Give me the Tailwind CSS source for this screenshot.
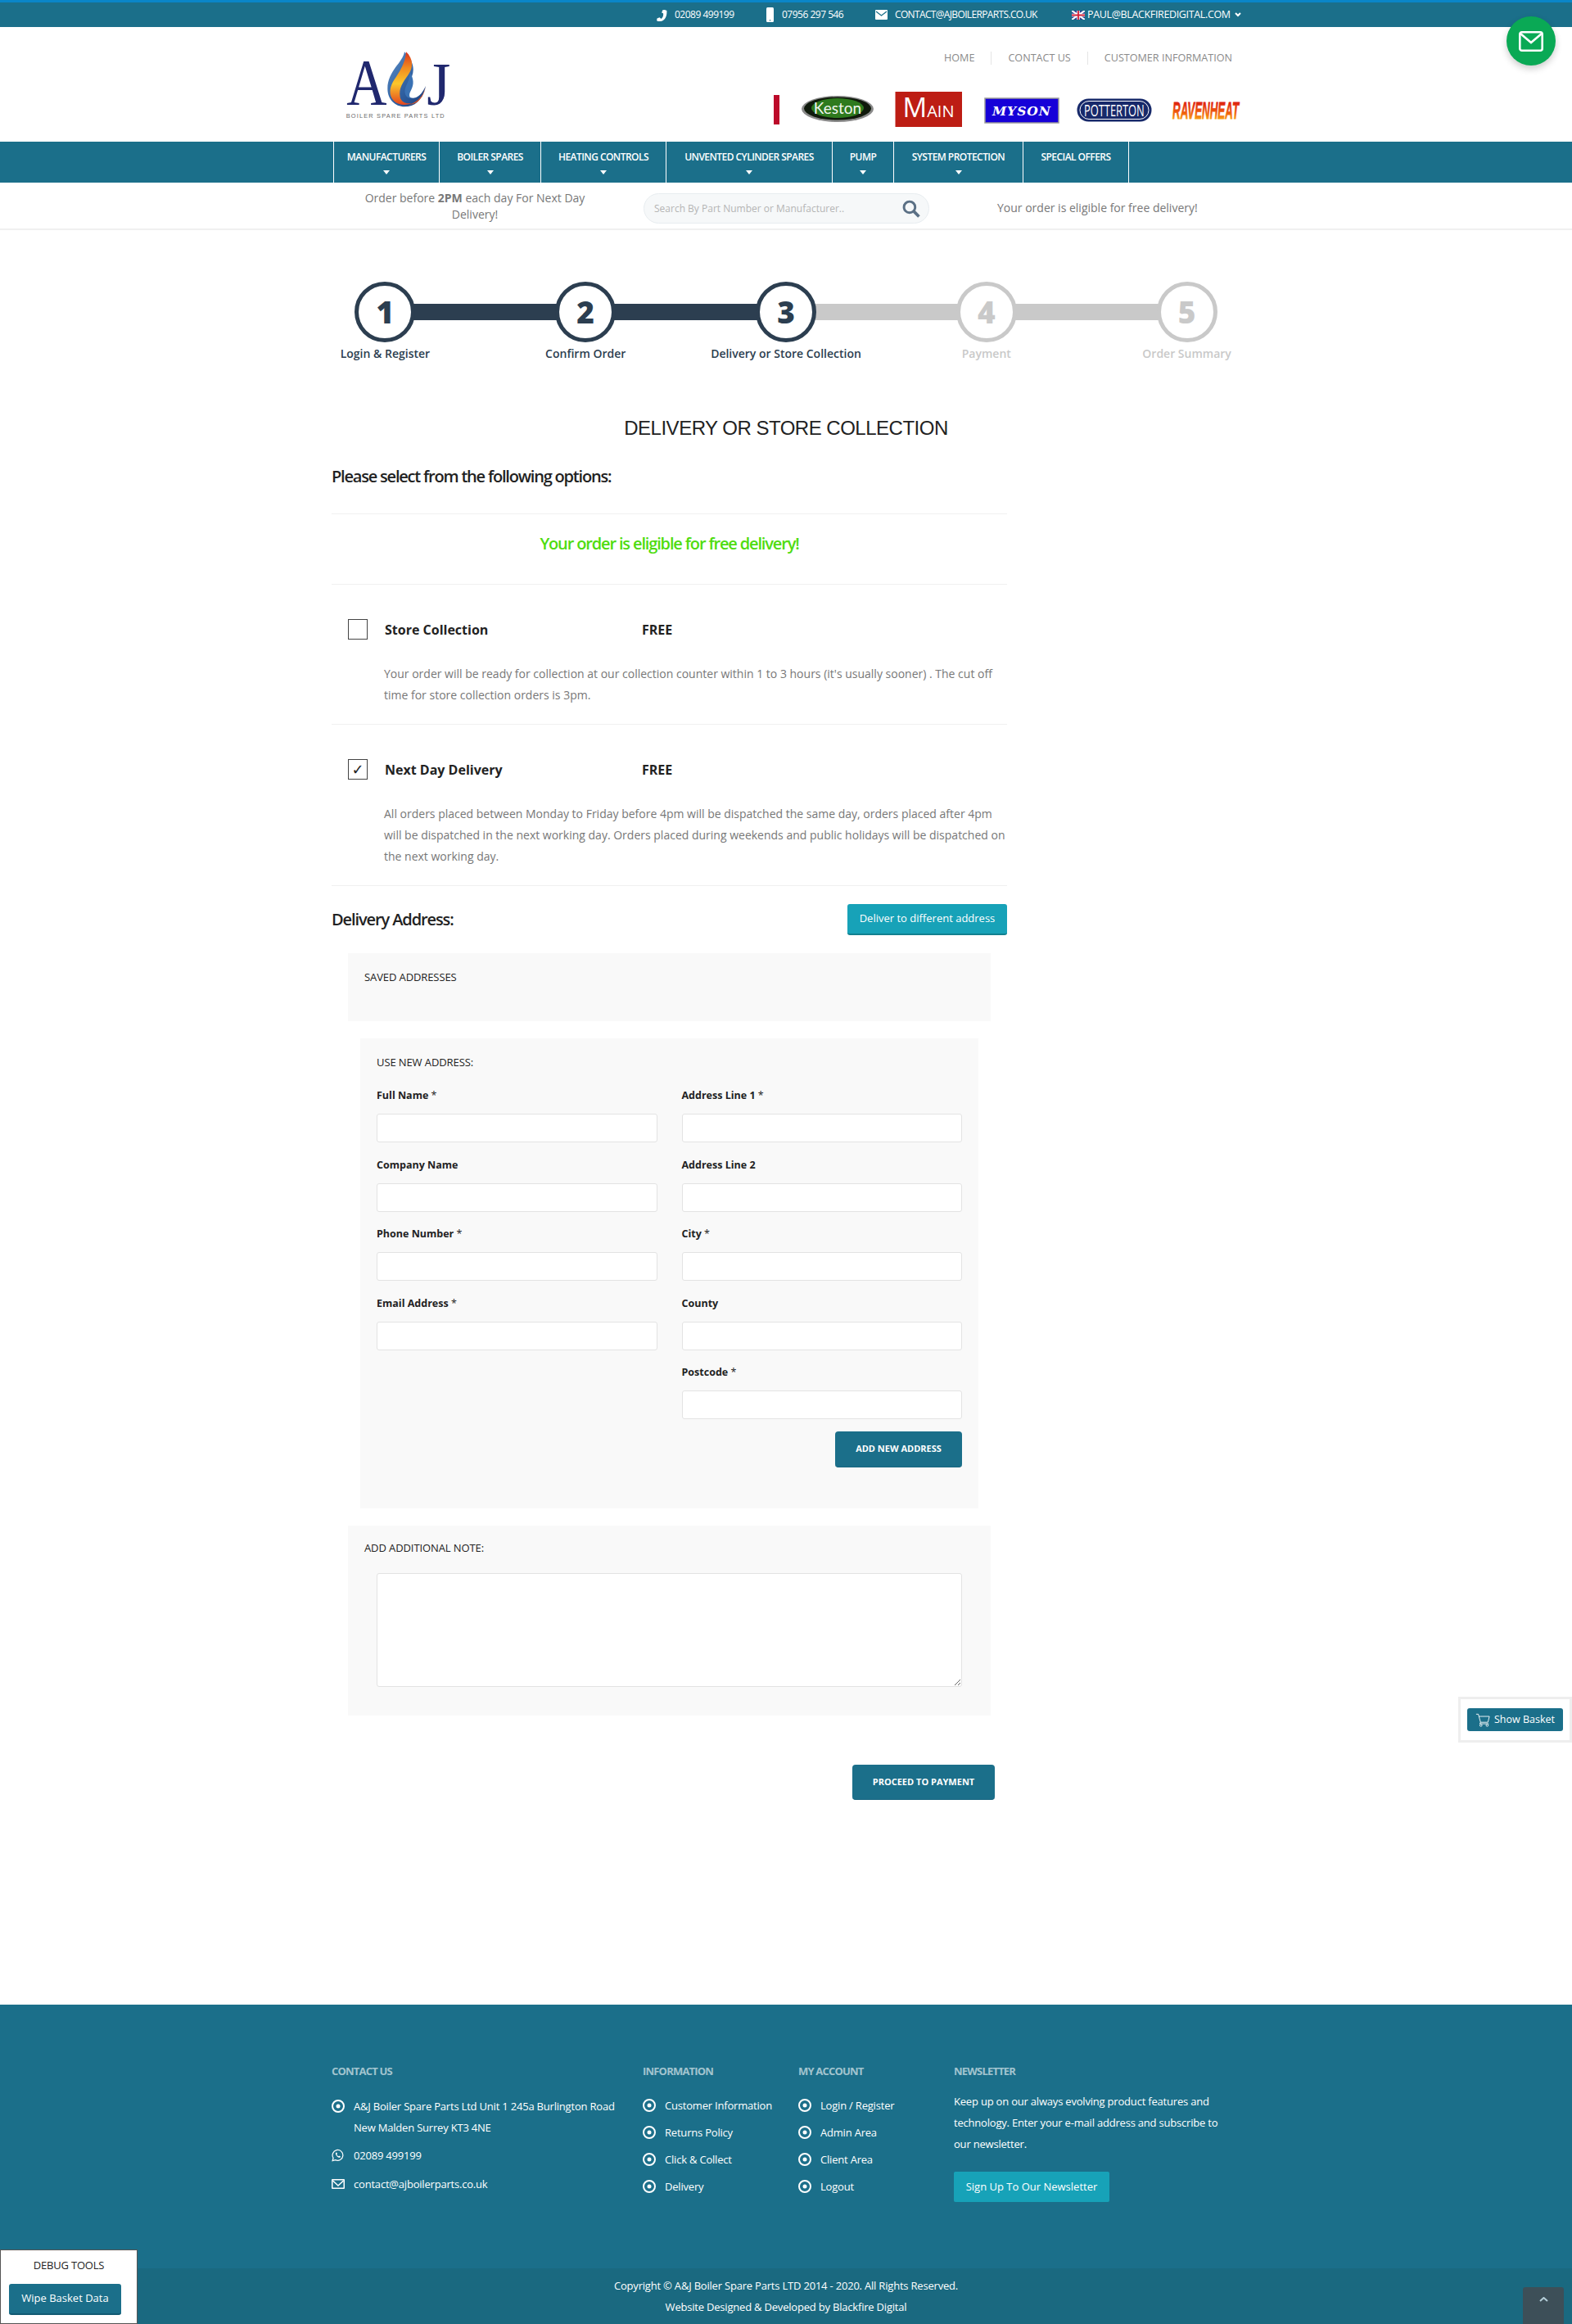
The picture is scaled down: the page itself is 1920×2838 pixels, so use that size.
<!DOCTYPE html>
<html lang="en"><head><meta charset="utf-8"><title>Delivery or Store Collection</title>
<script src="https://cdn.jsdelivr.net/npm/@tailwindcss/browser@4"></script></head>
<body class="bg-white">
<div class="relative h-[2838px] w-[1920px] overflow-hidden font-['Open_Sans',sans-serif] text-[14px] text-[#777]">

<!-- top bar -->
<header class="h-[33px] border-t-[3px] border-[#0a86c8] bg-[#1b6f8a] text-white text-[12px]">
  <div class="flex h-[30px] items-center pl-[800px]">
    <svg class="w-[15px] h-[15px]" viewBox="0 0 24 24" fill="#fff"><path d="M19 1.500l4 1.500c.6 9-2 20-13 21l-3 .3-3-1c-1-2 0-3.500 0-5l5-2 3 3c3-2 5-7 4-11L13 7l2-5z"/></svg>
    <span class="ml-[9px] w-[72px] whitespace-nowrap tracking-[-0.5px]">02089 499199</span>
    <svg class="ml-[40px] w-[9px] h-[18px]" viewBox="0 0 9 18"><rect width="9" height="18" rx="1.500" fill="#fff"/><rect x="4" y="15" width="1" height="1.500" fill="#1b6f8a"/></svg>
    <span class="ml-[10px] w-[75px] whitespace-nowrap tracking-[-0.5px]">07956 297 546</span>
    <svg class="ml-[39px] w-[15px] h-[12px]" viewBox="0 0 15 12"><rect width="15" height="12" rx="1" fill="#fff"/><path d="M1 2l6.500 5L14 2" fill="none" stroke="#1b6f8a" stroke-width="1.300"/></svg>
    <span class="ml-[9px] w-[177px] whitespace-nowrap tracking-[-0.65px]">CONTACT@AJBOILERPARTS.CO.UK</span>
    <svg class="ml-[39px] w-[16px] h-[11px]" viewBox="0 0 16 11"><rect width="16" height="11" fill="#2b3f8c"/><path d="M0 0l16 11M16 0L0 11" stroke="#fff" stroke-width="2.200"/><path d="M8 0v11M0 5.500h16" stroke="#fff" stroke-width="3.500"/><path d="M8 0v11M0 5.500h16" stroke="#d3213a" stroke-width="1.800"/></svg>
    <span class="ml-[3px] w-[177px] whitespace-nowrap text-[12.500px] tracking-[-0.35px]">PAUL@BLACKFIREDIGITAL.COM</span>
    <svg class="ml-[3px] w-[8px] h-[6px]" viewBox="0 0 8 6"><path d="M1 1l3 3 3-3" fill="none" stroke="#fff" stroke-width="2"/></svg>
  </div>
</header>

<!-- logo row -->
<div class="flex h-[140px] pl-[410px]">
  <svg class="mt-[22px] w-[150px] h-[100px]" viewBox="0 0 450 300" role="img" aria-label="A&amp;J Boiler Spare Parts Ltd">
    <defs>
      <linearGradient id="fa" x1="0" y1="0" x2="1" y2="1"><stop offset="0" stop-color="#5c8fc8"/><stop offset=".6" stop-color="#2d5d9e"/><stop offset="1" stop-color="#1e3f7c"/></linearGradient>
      <linearGradient id="fb" x1="0" y1="0" x2="0" y2="1"><stop offset="0" stop-color="#d8301c"/><stop offset=".3" stop-color="#f08a1f"/><stop offset=".6" stop-color="#fbc72c"/><stop offset="1" stop-color="#e3431e"/></linearGradient>
    </defs>
    <text transform="translate(40 220) scale(.86 1)" font-family="Liberation Serif" font-size="238" fill="#20286e">A</text>
    <text x="334" y="220" font-family="Liberation Serif" font-size="224" fill="#20286e">J</text>
    <path d="M252 25c-6 40-62 70-62 135 0 40 28 66 62 66 36 0 66-22 78-76-14 30-30 44-46 44-30 0-30-34-14-60 14-24 30-60-18-109z" fill="url(#fa)"/>
    <path d="M258 25c28 26 26 60 8 84-20 28-36 50-30 82 4 16 20 26 42 22-36 16-72-2-78-34-4-34 18-54 36-86 10-18 20-40 22-68z" fill="url(#fb)"/>
    <path d="M272 100c14 24 16 44 4 66-8 14-8 26 2 30-16 0-28-14-24-34 4-18 18-34 18-62z" fill="#3a72b4"/>
    <path d="M330 150c-6 34-28 58-60 68 20 0 52-16 60-68z" fill="#e3531e"/>
    <text x="38" y="266" font-family="Liberation Sans" font-size="22" textLength="360" fill="#6b6b6b">BOILER SPARE PARTS LTD</text>
  </svg>
  <div class="ml-[-5px] flex w-[950px] flex-col items-end">
    <nav class="mt-[30px] flex h-[16px] items-center whitespace-nowrap text-[12.600px] text-[#8a8a8a]">
      <span>HOME</span><span class="ml-[20px] h-[16px] w-px bg-[#e5e5e5]"></span>
      <span class="ml-[20px]">CONTACT US</span><span class="ml-[20px] h-[16px] w-px bg-[#e5e5e5]"></span>
      <span class="ml-[20px]">CUSTOMER INFORMATION</span>
    </nav>
    <div class="mt-[33px] flex items-center self-start pl-[390px]">
      <svg class="h-[45px] w-[575px] shrink-0" viewBox="0 0 575 45" role="img" aria-label="Manufacturer logos">
        <defs><linearGradient id="rv" x1="0" y1="0" x2="0" y2="1"><stop offset="0.1" stop-color="#d80f0f"/><stop offset=".6" stop-color="#f0600c"/><stop offset="1" stop-color="#ffd21a"/></linearGradient></defs>
        <rect x="0" y="4" width="7" height="36" fill="#bc0a2a"/>
        <ellipse cx="78" cy="21" rx="44" ry="16" fill="#8a8a8a"/><ellipse cx="78" cy="20.500" rx="41" ry="14" fill="#101a0c"/><ellipse cx="78" cy="20" rx="32" ry="12" fill="#2e7a1e"/>
        <text x="78" y="27" text-anchor="middle" font-family="Lato" font-size="19" fill="#f0f5ee">Keston</text>
        <rect x="148.500" y="0" width="81.500" height="43" fill="#bd1d14"/>
        <text x="189" y="31" text-anchor="middle" font-family="Open Sans" font-size="20" fill="#fff"><tspan font-size="33">M</tspan>AIN</text>
        <rect x="258" y="8" width="90" height="30" fill="#1600d8" stroke="#9a9a9a" stroke-width="1.500"/>
        <text x="303" y="29" text-anchor="middle" font-family="DejaVu Serif" font-weight="700" font-style="italic" font-size="15.500" letter-spacing="1" fill="#fff">MYSON</text>
        <rect x="370.500" y="8.500" width="91" height="28" rx="14" fill="#17296a"/><rect x="374" y="11.500" width="84" height="22" rx="11" fill="none" stroke="#fff" stroke-width="1"/>
        <text transform="translate(379 29.500) scale(.66 1)" font-family="Open Sans" font-size="19.500" fill="#fff">POTTERTON</text>
        <text transform="translate(487 33) scale(.445 1)" font-family="Liberation Sans" font-weight="700" font-style="italic" font-size="30" stroke="url(#rv)" stroke-width=".8" fill="url(#rv)">RAVENHEAT</text>
      </svg>
    </div>
  </div>
</div>

<!-- nav -->
<nav class="flex h-[50px] bg-[#1b6f8a] pl-[407px] text-white text-[12px] font-semibold tracking-[-0.55px] uppercase">
  <div class="flex h-full border-l border-white">
    <a class="flex w-[129px] flex-col items-center border-r border-white pt-[10px]"><span class="leading-[18px]">Manufacturers</span><i class="mt-[7px] h-0 w-0 border-x-[4px] border-t-[5px] border-x-transparent border-t-white"></i></a>
    <a class="flex w-[124px] flex-col items-center border-r border-white pt-[10px]"><span class="leading-[18px]">Boiler Spares</span><i class="mt-[7px] h-0 w-0 border-x-[4px] border-t-[5px] border-x-transparent border-t-white"></i></a>
    <a class="flex w-[153px] flex-col items-center border-r border-white pt-[10px]"><span class="leading-[18px]">Heating Controls</span><i class="mt-[7px] h-0 w-0 border-x-[4px] border-t-[5px] border-x-transparent border-t-white"></i></a>
    <a class="flex w-[203px] flex-col items-center border-r border-white pt-[10px]"><span class="leading-[18px]">Unvented Cylinder Spares</span><i class="mt-[7px] h-0 w-0 border-x-[4px] border-t-[5px] border-x-transparent border-t-white"></i></a>
    <a class="flex w-[75px] flex-col items-center border-r border-white pt-[10px]"><span class="leading-[18px]">Pump</span><i class="mt-[7px] h-0 w-0 border-x-[4px] border-t-[5px] border-x-transparent border-t-white"></i></a>
    <a class="flex w-[158px] flex-col items-center border-r border-white pt-[10px]"><span class="leading-[18px]">System Protection</span><i class="mt-[7px] h-0 w-0 border-x-[4px] border-t-[5px] border-x-transparent border-t-white"></i></a>
    <a class="flex w-[129px] flex-col items-center border-r border-white pt-[10px]"><span class="leading-[18px]">Special Offers</span></a>
  </div>
</nav>

<!-- sub bar -->
<div class="flex h-[58px] border-b-2 border-[#f0f0f0]">
  <p class="ml-[430px] mt-[9px] w-[300px] text-center leading-[20px]">Order before <b class="font-bold">2PM</b> each day For Next Day Delivery!</p>
  <div class="ml-[56px] mt-[13px] flex h-[37px] w-[349px] items-center justify-between rounded-full border border-[#e8edf0] bg-[#f6f8f9] pl-[12px] pr-[10px]">
    <span class="text-[12px] text-[#b5b5b5]">Search By Part Number or Manufacturer..</span>
    <svg class="h-[22px] w-[22px]" viewBox="0 0 21 21" fill="none" stroke="#5b7085" stroke-width="2.800"><circle cx="8.500" cy="8.500" r="6.500"/><path d="M13.500 13.500L19.500 19.500" stroke-width="3.500"/></svg>
  </div>
  <p class="ml-[83px] mt-[21px] whitespace-nowrap leading-[20px]">Your order is eligible for free delivery!</p>
</div>

<!-- stepper -->
<ol class="mx-auto mt-[63px] grid w-[1224px] grid-cols-5 text-center text-[14px] font-semibold">
  <li class="relative flex flex-col items-center text-[#2c3e50]">
    <span class="relative z-10 flex h-[74px] w-[74px] items-center justify-center rounded-full border-[5px] border-[#2c3e50] bg-white text-[37px] font-extrabold">1</span>
    <span class="mt-[4px] leading-[20px]">Login &amp; Register</span>
  </li>
  <li class="relative flex flex-col items-center text-[#2c3e50]">
    <span class="absolute right-1/2 top-[27px] h-[20px] w-full bg-[#2c3e50]"></span>
    <span class="relative z-10 flex h-[74px] w-[74px] items-center justify-center rounded-full border-[5px] border-[#2c3e50] bg-white text-[37px] font-extrabold">2</span>
    <span class="mt-[4px] leading-[20px]">Confirm Order</span>
  </li>
  <li class="relative flex flex-col items-center text-[#2c3e50]">
    <span class="absolute right-1/2 top-[27px] h-[20px] w-full bg-[#2c3e50]"></span>
    <span class="relative z-10 flex h-[74px] w-[74px] items-center justify-center rounded-full border-[5px] border-[#2c3e50] bg-white text-[37px] font-extrabold">3</span>
    <span class="mt-[4px] leading-[20px]">Delivery or Store Collection</span>
  </li>
  <li class="relative flex flex-col items-center text-[#c9c9c9]">
    <span class="absolute right-1/2 top-[27px] h-[20px] w-full bg-[#c9c9c9]"></span>
    <span class="relative z-10 flex h-[74px] w-[74px] items-center justify-center rounded-full border-[5px] border-[#c9c9c9] bg-white text-[37px] font-extrabold">4</span>
    <span class="mt-[4px] leading-[20px]">Payment</span>
  </li>
  <li class="relative flex flex-col items-center text-[#c9c9c9]">
    <span class="absolute right-1/2 top-[27px] h-[20px] w-full bg-[#c9c9c9]"></span>
    <span class="relative z-10 flex h-[74px] w-[74px] items-center justify-center rounded-full border-[5px] border-[#c9c9c9] bg-white text-[37px] font-extrabold">5</span>
    <span class="mt-[4px] leading-[20px]">Order Summary</span>
  </li>
</ol>

<h1 class="mt-[65px] text-center font-['Liberation_Sans',sans-serif] text-[24px] leading-[32px] tracking-[-0.5px] text-[#222] uppercase">Delivery or Store Collection</h1>

<main class="ml-[405px] w-[825px]">
  <h2 class="mt-[29px] text-[20px] font-semibold leading-[28px] tracking-[-1.2px] text-[#222]">Please select from the following options:</h2>
  <div class="mt-[31px] h-[87px] border-y border-[#f0f0f0] pt-[22px] text-center text-[20px] font-semibold leading-[28px] tracking-[-1.15px] text-[#4fdc10]">Your order is eligible for free delivery!</div>

  <section class="h-[171px] border-b border-[#f0f0f0] pl-[20px] pt-[42px]">
    <div class="flex h-[25px] items-center text-[16px] font-bold text-[#222]">
      <span class="h-[25px] w-[24px] border border-[#444]"></span>
      <span class="ml-[21px] w-[314px]">Store Collection</span><span>FREE</span>
    </div>
    <p class="ml-[44px] mt-[29px] leading-[26px]">Your order will be ready for collection at our collection counter within 1 to 3 hours (it's usually sooner) . The cut off time for store collection orders is 3pm.</p>
  </section>
  <section class="h-[197px] border-b border-[#f0f0f0] pl-[20px] pt-[42px]">
    <div class="flex h-[25px] items-center text-[16px] font-bold text-[#222]">
      <span class="flex h-[25px] w-[24px] items-center justify-center border border-[#444] font-['DejaVu_Sans',sans-serif] text-[18px] font-normal">✓</span>
      <span class="ml-[21px] w-[314px]">Next Day Delivery</span><span>FREE</span>
    </div>
    <p class="ml-[44px] mt-[29px] leading-[26px]">All orders placed between Monday to Friday before 4pm will be dispatched the same day, orders placed after 4pm will be dispatched in the next working day. Orders placed during weekends and public holidays will be dispatched on the next working day.</p>
  </section>

  <div class="flex items-center justify-between pt-[22px]">
    <h2 class="text-[20px] font-semibold leading-[28px] tracking-[-1.1px] text-[#222]">Delivery Address:</h2>
    <button class="h-[38px] w-[195px] rounded-[3px] border-b-2 border-[#11808f] bg-[#17a2b8] text-[13px] font-normal text-white">Deliver to different address</button>
  </div>

  <section class="ml-[20px] mt-[22px] h-[83px] w-[785px] bg-[#f9f9f9] pl-[20px] pt-[19px]">
    <h3 class="text-[13px] font-normal leading-[20px] tracking-[-0.1px] text-[#222] uppercase">Saved Addresses</h3>
  </section>

  <section class="ml-[35px] mt-[21px] h-[574px] w-[755px] bg-[#f9f9f9] pl-[20px] pt-[19px]">
    <h3 class="text-[13px] font-normal leading-[20px] tracking-[-0.1px] text-[#222] uppercase">Use new address:</h3>
    <div class="mt-[21px] grid w-[715px] grid-cols-2 gap-x-[30px] gap-y-[17.500px] text-[12.500px] font-bold text-[#222]">
      <label class="block"><span class="block leading-[20px]">Full Name <span class="font-normal">*</span></span><input class="mt-[12px] block h-[35px] w-full rounded-[3px] border border-[#e3e3e3] bg-white"></label>
      <label class="block"><span class="block leading-[20px]">Address Line 1 <span class="font-normal">*</span></span><input class="mt-[12px] block h-[35px] w-full rounded-[3px] border border-[#e3e3e3] bg-white"></label>
      <label class="block"><span class="block leading-[20px]">Company Name</span><input class="mt-[12px] block h-[35px] w-full rounded-[3px] border border-[#e3e3e3] bg-white"></label>
      <label class="block"><span class="block leading-[20px]">Address Line 2</span><input class="mt-[12px] block h-[35px] w-full rounded-[3px] border border-[#e3e3e3] bg-white"></label>
      <label class="block"><span class="block leading-[20px]">Phone Number <span class="font-normal">*</span></span><input class="mt-[12px] block h-[35px] w-full rounded-[3px] border border-[#e3e3e3] bg-white"></label>
      <label class="block"><span class="block leading-[20px]">City <span class="font-normal">*</span></span><input class="mt-[12px] block h-[35px] w-full rounded-[3px] border border-[#e3e3e3] bg-white"></label>
      <label class="block"><span class="block leading-[20px]">Email Address <span class="font-normal">*</span></span><input class="mt-[12px] block h-[35px] w-full rounded-[3px] border border-[#e3e3e3] bg-white"></label>
      <label class="block"><span class="block leading-[20px]">County</span><input class="mt-[12px] block h-[35px] w-full rounded-[3px] border border-[#e3e3e3] bg-white"></label>
      <div></div>
      <label class="block"><span class="block leading-[20px]">Postcode <span class="font-normal">*</span></span><input class="mt-[12px] block h-[35px] w-full rounded-[3px] border border-[#e3e3e3] bg-white"></label>
    </div>
    <div class="mt-[15px] flex w-[715px] justify-end">
      <button class="h-[44px] w-[155px] rounded-[4px] border-b border-[#176580] bg-[#1b6f8a] text-[11px] font-bold text-white uppercase">Add new address</button>
    </div>
  </section>

  <section class="ml-[20px] mt-[21px] h-[232px] w-[785px] bg-[#f9f9f9] pl-[20px] pt-[17px]">
    <h3 class="text-[13px] font-normal leading-[20px] tracking-[-0.1px] text-[#222] uppercase">Add additional note:</h3>
    <textarea class="ml-[15px] mt-[21px] block h-[139px] w-[715px] rounded-[3px] border border-[#e3e3e3] bg-white" aria-label="Additional note"></textarea>
  </section>

  <div class="mt-[60px] flex justify-end pr-[15px]">
    <button class="h-[43px] w-[174px] rounded-[4px] border-b border-[#176580] bg-[#1b6f8a] text-[11px] font-bold text-white uppercase">Proceed to payment</button>
  </div>
</main>

<!-- footer -->
<footer class="mt-[250px] bg-[#1b6f8a] text-white">
  <div class="grid h-[322px] grid-cols-[380px_190px_190px_350px] pl-[405px] pt-[71px] text-[13px] tracking-[-0.2px]">
    <div>
      <h4 class="text-[13px] font-bold leading-[20px] tracking-[-0.8px] text-white/60 uppercase">Contact us</h4>
      <div class="mt-[20px] flex">
        <svg class="mt-[5px] h-[16px] w-[16px] shrink-0" viewBox="0 0 16 16"><circle cx="8" cy="8" r="7" fill="none" stroke="#fff" stroke-width="2"/><circle cx="8" cy="8" r="2.500" fill="#fff"/></svg>
        <p class="ml-[11px] w-[350px] leading-[26px]">A&amp;J Boiler Spare Parts Ltd Unit 1 245a Burlington Road<br>New Malden Surrey KT3 4NE</p>
      </div>
      <div class="mt-[8px] flex items-center leading-[26px]">
        <svg class="h-[16px] w-[15px] shrink-0" viewBox="0 0 16 16" fill="none" stroke="#fff" stroke-width="1.300"><path d="M1.200 15l1-3.500A6.800 6.800 0 1 1 5 14z"/><path d="M5.500 4.500c-1.500 2 2.500 7 5.500 6.500l.7-1.500-2-1-.8.800c-1-.4-1.800-1.300-2.200-2.300l.8-.8-.8-2z" fill="#fff" stroke="none"/></svg>
        <span class="ml-[12px]">02089 499199</span>
      </div>
      <div class="mt-[9px] flex items-center leading-[26px]">
        <svg class="h-[12px] w-[16px] shrink-0" viewBox="0 0 16 12"><rect width="16" height="12" rx="1" fill="#fff"/><rect x="1.500" y="1.500" width="13" height="9" fill="#1b6f8a"/><path d="M1.500 2L8 8l6.500-6" fill="none" stroke="#fff" stroke-width="1.500"/></svg>
        <span class="ml-[11px]">contact@ajboilerparts.co.uk</span>
      </div>
    </div>
    <div>
      <h4 class="text-[13px] font-bold leading-[20px] tracking-[-0.8px] text-white/60 uppercase">Information</h4>
      <ul class="mt-[19px] flex flex-col gap-[7px] leading-[26px]">
        <li class="flex items-center"><svg class="h-[16px] w-[16px] shrink-0" viewBox="0 0 16 16"><circle cx="8" cy="8" r="7" fill="none" stroke="#fff" stroke-width="2"/><circle cx="8" cy="8" r="2.500" fill="#fff"/></svg><span class="ml-[11px]">Customer Information</span></li>
        <li class="flex items-center"><svg class="h-[16px] w-[16px] shrink-0" viewBox="0 0 16 16"><circle cx="8" cy="8" r="7" fill="none" stroke="#fff" stroke-width="2"/><circle cx="8" cy="8" r="2.500" fill="#fff"/></svg><span class="ml-[11px]">Returns Policy</span></li>
        <li class="flex items-center"><svg class="h-[16px] w-[16px] shrink-0" viewBox="0 0 16 16"><circle cx="8" cy="8" r="7" fill="none" stroke="#fff" stroke-width="2"/><circle cx="8" cy="8" r="2.500" fill="#fff"/></svg><span class="ml-[11px]">Click &amp; Collect</span></li>
        <li class="flex items-center"><svg class="h-[16px] w-[16px] shrink-0" viewBox="0 0 16 16"><circle cx="8" cy="8" r="7" fill="none" stroke="#fff" stroke-width="2"/><circle cx="8" cy="8" r="2.500" fill="#fff"/></svg><span class="ml-[11px]">Delivery</span></li>
      </ul>
    </div>
    <div>
      <h4 class="text-[13px] font-bold leading-[20px] tracking-[-0.8px] text-white/60 uppercase">My account</h4>
      <ul class="mt-[19px] flex flex-col gap-[7px] leading-[26px]">
        <li class="flex items-center"><svg class="h-[16px] w-[16px] shrink-0" viewBox="0 0 16 16"><circle cx="8" cy="8" r="7" fill="none" stroke="#fff" stroke-width="2"/><circle cx="8" cy="8" r="2.500" fill="#fff"/></svg><span class="ml-[11px]">Login / Register</span></li>
        <li class="flex items-center"><svg class="h-[16px] w-[16px] shrink-0" viewBox="0 0 16 16"><circle cx="8" cy="8" r="7" fill="none" stroke="#fff" stroke-width="2"/><circle cx="8" cy="8" r="2.500" fill="#fff"/></svg><span class="ml-[11px]">Admin Area</span></li>
        <li class="flex items-center"><svg class="h-[16px] w-[16px] shrink-0" viewBox="0 0 16 16"><circle cx="8" cy="8" r="7" fill="none" stroke="#fff" stroke-width="2"/><circle cx="8" cy="8" r="2.500" fill="#fff"/></svg><span class="ml-[11px]">Client Area</span></li>
        <li class="flex items-center"><svg class="h-[16px] w-[16px] shrink-0" viewBox="0 0 16 16"><circle cx="8" cy="8" r="7" fill="none" stroke="#fff" stroke-width="2"/><circle cx="8" cy="8" r="2.500" fill="#fff"/></svg><span class="ml-[11px]">Logout</span></li>
      </ul>
    </div>
    <div>
      <h4 class="text-[13px] font-bold leading-[20px] tracking-[-0.8px] text-white/60 uppercase">Newsletter</h4>
      <p class="mt-[14px] w-[335px] leading-[26px]">Keep up on our always evolving product features and technology. Enter your e-mail address and subscribe to our newsletter.</p>
      <button class="mt-[21px] h-[37px] w-[190px] rounded-[2px] bg-[#17a2b8] text-[13px] font-normal tracking-normal">Sign Up To Our Newsletter</button>
    </div>
  </div>
  <div class="h-[68px] bg-[#1a6980] pt-[8px] text-center text-[13px] leading-[26px] tracking-[-0.2px]">
    <p>Copyright © A&amp;J Boiler Spare Parts LTD 2014 - 2020. All Rights Reserved.</p>
    <p>Website Designed &amp; Developed by Blackfire Digital</p>
  </div>
</footer>

<!-- overlays -->
<a class="absolute left-[1840px] top-[20px] flex h-[60px] w-[60px] items-center justify-center rounded-full bg-[#0aa955] shadow-[0_4px_8px_rgba(0,0,0,0.2)]" aria-label="Email">
  <svg class="h-[25px] w-[30px]" viewBox="0 0 30 25" fill="none" stroke="#fff" stroke-width="2.600"><rect x="1.300" y="1.300" width="27.400" height="22.400" rx="2.500"/><path d="M2 3l13 11L28 3"/></svg>
</a>

<div class="absolute left-[1781px] top-[2072px] flex h-[56px] w-[139px] items-center border-[3px] border-[#eee] bg-white pl-[8px]">
  <button class="flex h-[28px] w-[117px] items-center justify-center rounded-[3px] bg-[#1b6f8a] text-[12.500px] text-white">
    <svg class="h-[17px] w-[18px]" viewBox="0 0 20 18" fill="none" stroke="#fff" stroke-width="1"><path d="M1 1h3l3 11h10l2-8H5"/><path d="M7 12l-1 2h12"/><circle cx="7.500" cy="16" r="1.500"/><circle cx="16" cy="16" r="1.500"/></svg>
    <span class="ml-[5px]">Show Basket</span>
  </button>
</div>

<div class="absolute left-0 top-[2747px] h-[91px] w-[168px] border border-[#555] bg-white text-center">
  <p class="mt-[8px] text-[13px] font-normal leading-[20px] tracking-[-0.2px] text-[#222]">DEBUG TOOLS</p>
  <button class="ml-[-9px] mt-[13px] h-[38px] w-[137px] rounded-[3px] border-b-2 border-[#125a72] bg-[#1b6f8a] text-[13px] font-normal text-white">Wipe Basket Data</button>
</div>

<a class="absolute left-[1860px] top-[2793px] flex h-[45px] w-[50px] justify-center rounded-t-[3px] bg-[#3d4f58] pt-[12px]" aria-label="Back to top">
  <svg class="h-[6px] w-[11px]" viewBox="0 0 11 6"><path d="M1 5l4.500-4L10 5" fill="none" stroke="#b5ced8" stroke-width="2"/></svg>
</a>
</div>
</body></html>
